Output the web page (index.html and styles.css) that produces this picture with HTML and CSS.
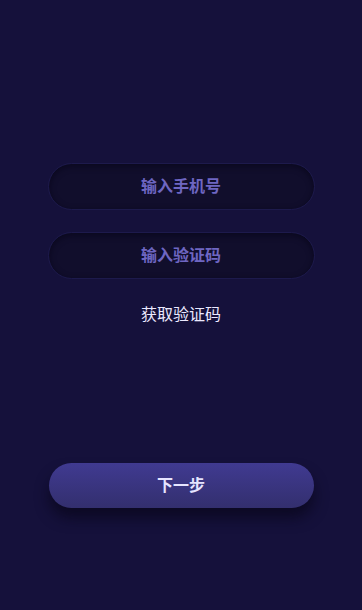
FILE: index.html
```html
<!DOCTYPE html>
<html lang="zh">
<head>
<meta charset="utf-8">
<link rel="stylesheet" href="styles.css">
</head>
<body>
<div class="page">
  <div class="field"><span class="ph">输入手机号</span></div>
  <div class="field field-2"><span class="ph">输入验证码</span></div>
  <div class="get-code">获取验证码</div>
  <button class="next">下一步</button>
</div>
</body>
</html>
```
FILE: styles.css
```css
html, body {
  margin: 0;
  padding: 0;
  background: #15113b;
}
.page {
  width: 362px;
  height: 610px;
  box-sizing: border-box;
  padding-top: 163px;
  display: flex;
  flex-direction: column;
  align-items: center;
  font-family: "Microsoft YaHei", "Noto Sans CJK SC", sans-serif;
}
.field {
  width: 267px;
  height: 47px;
  box-sizing: border-box;
  padding-bottom: 3px;
  border-radius: 24px;
  background: #110e2c;
  border: 1px solid #1d1a4c;
  box-shadow: inset 0 2px 6px rgba(5, 3, 20, 0.6);
  display: flex;
  align-items: center;
  justify-content: center;
}
.field-2 {
  margin-top: 22px;
}
.ph {
  color: #6e66c2;
  font-size: 16px;
  font-weight: 700;
  line-height: 22px;
}
.get-code {
  margin-top: 23px;
  color: #ebe9ff;
  font-size: 16px;
  line-height: 22px;
}
.next {
  margin-top: 139px;
  width: 265px;
  height: 45px;
  border: none;
  border-radius: 23px;
  padding: 0 0 4px 0;
  background: linear-gradient(180deg, #403a91 0%, #332f6e 100%);
  box-shadow: 0 10px 14px rgba(8, 6, 26, 0.7);
  color: #e6e4ff;
  font-family: "Microsoft YaHei", "Noto Sans CJK SC", sans-serif;
  font-size: 16px;
  font-weight: 700;
}
```
